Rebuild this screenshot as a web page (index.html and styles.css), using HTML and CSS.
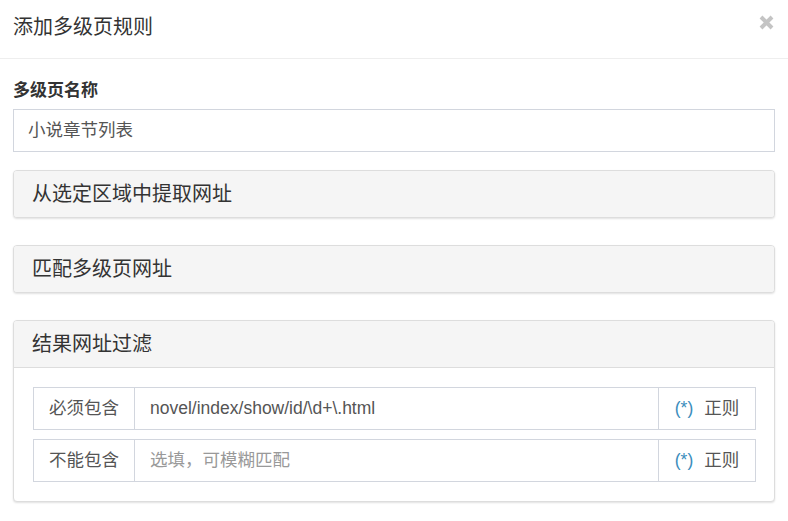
FILE: index.html
```html
<!DOCTYPE html>
<html lang="zh-CN">
<head>
<meta charset="utf-8">
<title>添加多级页规则</title>
<link rel="stylesheet" href="styles.css">
</head>
<body>
<div class="modal">
  <div class="modal-header">
    <h4 class="modal-title">添加多级页规则</h4>
    <span class="close" aria-label="关闭">
      <svg width="15" height="15" viewBox="0 0 15 15"><path d="M2 2 L13 13 M13 2 L2 13" stroke="#c4c4c4" stroke-width="4" stroke-linecap="butt"/></svg>
    </span>
  </div>
  <div class="modal-body">
    <label class="field-label">多级页名称</label>
    <div class="form-control">小说章节列表</div>

    <div class="panel">
      <div class="panel-heading">从选定区域中提取网址</div>
    </div>

    <div class="panel">
      <div class="panel-heading">匹配多级页网址</div>
    </div>

    <div class="panel">
      <div class="panel-heading with-body">结果网址过滤</div>
      <div class="panel-body">
        <div class="input-group">
          <span class="addon addon-left">必须包含</span>
          <span class="group-input">novel/index/show/id/\d+\.html</span>
          <span class="addon addon-right"><span class="star">(*)</span>正则</span>
        </div>
        <div class="input-group">
          <span class="addon addon-left">不能包含</span>
          <span class="group-input placeholder">选填，可模糊匹配</span>
          <span class="addon addon-right"><span class="star">(*)</span>正则</span>
        </div>
      </div>
    </div>
  </div>
</div>
</body>
</html>
```

FILE: styles.css
```css
* { box-sizing: border-box; }
html, body { margin: 0; padding: 0; background: #fff; }
body {
  font-family: "Liberation Sans", "Noto Sans CJK SC", sans-serif;
  color: #333;
  width: 788px;
}
.modal-header {
  height: 59px;
  padding: 13px 14px 0 13px;
  border-bottom: 1px solid #eeeeee;
  display: flex;
  justify-content: space-between;
  align-items: flex-start;
}
.modal-title {
  margin: 0;
  font-size: 20px;
  line-height: 28px;
  font-weight: normal;
  color: #333;
}
.close {
  display: block;
  margin-top: 2px;
  width: 15px;
  height: 15px;
}
.close svg { display: block; }
.modal-body {
  padding: 0 13px 20px 13px;
}
.field-label {
  display: block;
  margin-top: 20px;
  font-size: 17px;
  line-height: 24px;
  font-weight: bold;
  color: #333;
}
.form-control {
  margin-top: 6px;
  height: 43px;
  border: 1px solid #d2d6de;
  padding: 0 14px;
  font-size: 17.5px;
  line-height: 41px;
  color: #555;
}
.panel {
  margin-top: 18px;
  border: 1px solid #dddddd;
  border-radius: 4px;
  box-shadow: 0 1px 2px rgba(0,0,0,0.12);
  background: #fff;
}
.panel + .panel { margin-top: 27px; }
.panel-heading {
  height: 46px;
  padding: 0 18px;
  background: #f5f5f5;
  border-radius: 3px;
  font-size: 20px;
  line-height: 46px;
  color: #333;
}
.panel-heading.with-body {
  height: 47px;
  border-bottom: 1px solid #dddddd;
  border-radius: 3px 3px 0 0;
}
.panel-body {
  padding: 19px 18px 19px 19px;
  display: flex;
  flex-direction: column;
  gap: 9px;
}
.input-group {
  display: flex;
  height: 43px;
  font-size: 17.5px;
  color: #555;
}
.input-group > span {
  border: 1px solid #d2d6de;
  line-height: 41px;
  background: #fff;
}
.addon-left {
  width: 102px;
  text-align: center;
}
.group-input {
  flex: 1;
  margin-left: -1px;
  padding: 0 15px;
  color: #555;
}
.group-input.placeholder { color: #999; }
.addon-right {
  width: 98px;
  margin-left: -1px;
  text-align: center;
}
.star {
  color: #3c8dbc;
  margin-right: 11px;
}
```
